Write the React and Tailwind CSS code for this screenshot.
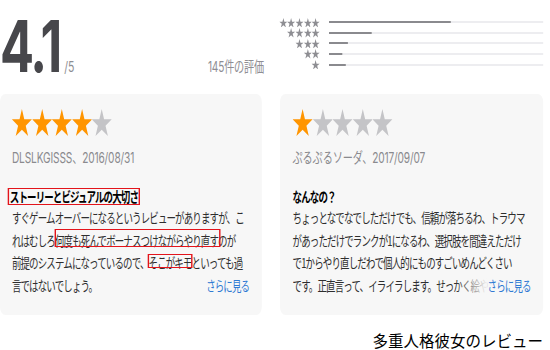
import React from "react";

const STAR =
  "47.55,0 58.78,34.55 95.1,34.55 65.71,55.9 76.94,90.45 47.55,69.1 18.16,90.45 29.39,55.9 0,34.55 36.32,34.55";

function Star({ className }) {
  return (
    <svg viewBox="0 0 95.1 90.45" preserveAspectRatio="none" className={className}>
      <polygon points={STAR} />
    </svg>
  );
}

function BigStars({ n }) {
  return (
    <div className="flex">
      {[0, 1, 2, 3, 4].map((i) => (
        <Star
          key={i}
          className={
            "h-[27px] w-[28.6px] " + (i < n ? "fill-[#ff9500]" : "fill-[#c4c4c7]")
          }
        />
      ))}
    </div>
  );
}

const rows = [
  { n: 5, f: 0.57 },
  { n: 4, f: 0.2 },
  { n: 3, f: 0.089 },
  { n: 2, f: 0.061 },
  { n: 1, f: 0.079 },
];

const body =
  "font-['Noto_Sans_CJK_JP',sans-serif] text-[13.5px] tracking-[-1.2px] leading-[22.5px] text-[#2e2e2e] whitespace-nowrap";
const author =
  "font-['Inter','Noto_Sans_CJK_JP',sans-serif] text-[14.5px] leading-[20px] text-[#8a8a8e] tracking-[-0.2px]";
const link = "text-[#2f7ad3]";

export default function App() {
  return (
    <div className="w-[550px] h-[350px] overflow-hidden bg-white">
      <div className="w-[786px] origin-top-left scale-x-[0.7]">
        {/* header */}
        <div className="flex h-[94px]">
          <div className="flex w-[377px] items-baseline pt-[10px]">
            <span className="font-['Inter',sans-serif] text-[72px] font-bold leading-[72px] tracking-[-3px] text-[#47474b]">
              4.1
            </span>
            <span className="ml-[6px] font-['Inter',sans-serif] text-[15px] text-[#8e8e93]">
              /5
            </span>
            <span className="ml-auto font-['Inter','Noto_Sans_CJK_JP',sans-serif] text-[14.5px] tracking-[-0.3px] text-[#8e8e93]">
              145件の評価
            </span>
          </div>
          <div className="ml-[21px] flex flex-col pt-[17px]">
            {rows.map((r) => (
              <div key={r.n} className="flex h-[10.6px] items-center">
                <div className="flex w-[59px] justify-end">
                  {Array.from({ length: r.n }).map((_, i) => (
                    <Star key={i} className="h-[9.5px] w-[11.7px] fill-[#8e8e93]" />
                  ))}
                </div>
                <div className="ml-[13px] h-[2px] w-[306px] bg-[#ededf0]">
                  <div
                    className="h-full bg-[#8a8a8e]"
                    style={{ width: `${r.f * 100}%` }}
                  />
                </div>
              </div>
            ))}
          </div>
        </div>

        {/* cards */}
        <div className="flex gap-[26px]">
          {/* left card */}
          <div className="h-[221px] w-[374px] rounded-[8px] bg-[#f7f7f7] pl-[17px] pr-[18px] pt-[15px]">
            <BigStars n={4} />
            <div className={"mt-[12px] " + author}>DLSLKGISSS、2016/08/31</div>
            <div className="mt-[18px] flex h-[20px] items-center">
              <span className="-ml-[6px] flex h-[17px] items-center border-x-2 border-y-[1.5px] border-[#e3141b] px-px font-['Noto_Sans_CJK_JP',sans-serif] text-[13.5px] font-bold tracking-[-1.2px] text-black">
                ストーリーとビジュアルの大切さ
              </span>
            </div>
            <div className={body}>
              <div>すぐゲームオーバーになるというレビューがありますが、こ</div>
              <div>
                れはむしろ
                <span className="relative">
                  何度も死んでボーナスつけながらやり直す
                  <span className="absolute -left-px -right-[3px] -top-px bottom-[2.5px] border-x-2 border-y-[1.5px] border-[#e3141b]" />
                </span>
                のが
              </div>
              <div>
                前提のシステムになっているので、
                <span className="relative">
                  そこがキモ
                  <span className="absolute -left-px -right-[1px] top-[1.5px] bottom-[4px] border-x-2 border-y-[1.5px] border-[#e3141b]" />
                </span>
                といっても過
              </div>
              <div className="flex">
                <span>言ではないでしょう。</span>
                <span className={"ml-auto " + link}>さらに見る</span>
              </div>
            </div>
          </div>

          {/* right card */}
          <div className="h-[221px] w-[376px] rounded-[8px] bg-[#f7f7f7] pl-[18px] pr-[18px] pt-[15px]">
            <BigStars n={1} />
            <div className={"mt-[12px] " + author}>ぷるぷるソーダ、2017/09/07</div>
            <div className="mt-[18px] flex h-[20px] items-center font-['Noto_Sans_CJK_JP',sans-serif] text-[13.5px] font-bold tracking-[-1.2px] text-black">
              なんなの？
            </div>
            <div className={body}>
              <div>ちょっとなでなでしただけでも、信頼が落ちるわ、トラウマ</div>
              <div>があっただけでランクが1になるわ、選択肢を間違えただけ</div>
              <div>で1からやり直しだわで個人的にものすごいめんどくさい</div>
              <div className="flex">
                <span className="min-w-0 overflow-hidden">
                  です。正直言って、イライラします。せっかく絵やシナリオ
                </span>
                <span className={"relative ml-auto shrink-0 bg-[#f7f7f7] " + link}>
                  <span className="absolute right-full top-0 h-full w-[46px] bg-linear-to-r from-[#f7f7f7]/0 to-[#f7f7f7]" />
                  さらに見る
                </span>
              </div>
            </div>
          </div>
        </div>
      </div>

      <div className="mt-[15px] pr-[7px] text-right font-['Noto_Sans_CJK_JP',sans-serif] text-[15.5px] leading-[20px] text-black">
        多重人格彼女のレビュー
      </div>
    </div>
  );
}
